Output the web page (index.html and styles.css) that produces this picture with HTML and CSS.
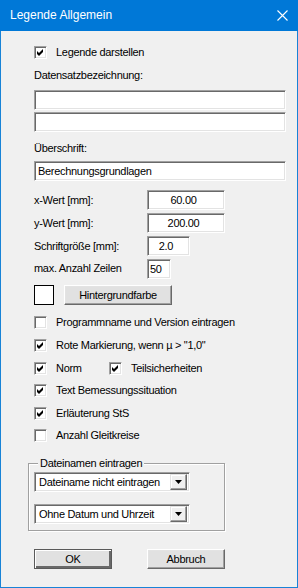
FILE: index.html
```html
<!DOCTYPE html>
<html lang="de">
<head>
    <meta charset="UTF-8">
    <title>Legende Allgemein</title>
    <link rel="stylesheet" href="styles.css">
</head>
<body>
    <div class="dialog">
        <div class="titlebar">
            <span class="title">Legende Allgemein</span>
            <svg class="close" width="11" height="11" viewBox="0 0 11 11">
                <path d="M0.5 0.5 L10.5 10.5 M10.5 0.5 L0.5 10.5" stroke="#fff" stroke-width="1.1" fill="none"/>
            </svg>
        </div>

        <div class="content">
            <div class="check first">
                <span class="cb"><svg width="11" height="11" viewBox="0 0 11 11"><path d="M2 4 L4 6 L8 2 L8 5 L4 9 L2 7 Z"/></svg></span>
                Legende darstellen
            </div>

            <div class="caption cap-top">Datensatzbezeichnung:</div>
            <div class="edit wide ed1"></div>
            <div class="edit wide ed2"></div>

            <div class="caption cap-head">Überschrift:</div>
            <div class="edit wide ed3">Berechnungsgrundlagen</div>

            <div class="field-row fr1">
                <span class="field-label">x-Wert [mm]:</span>
                <div class="edit num">60.00</div>
            </div>
            <div class="field-row">
                <span class="field-label">y-Wert [mm]:</span>
                <div class="edit num">200.00</div>
            </div>
            <div class="field-row">
                <span class="field-label">Schriftgröße [mm]:</span>
                <div class="edit small">2.0</div>
            </div>
            <div class="field-row">
                <span class="field-label lift">max. Anzahl Zeilen</span>
                <div class="edit tiny">50</div>
            </div>

            <div class="color-row">
                <span class="swatch"></span>
                <button class="btn bg-btn">Hintergrundfarbe</button>
            </div>

            <div class="options">
                <div class="check">
                    <span class="cb"></span>
                    Programmname und Version eintragen
                </div>
                <div class="check">
                    <span class="cb"><svg width="11" height="11" viewBox="0 0 11 11"><path d="M2 4 L4 6 L8 2 L8 5 L4 9 L2 7 Z"/></svg></span>
                    Rote Markierung, wenn µ &gt; "1,0"
                </div>
                <div class="check-pair">
                    <div class="check norm">
                        <span class="cb"><svg width="11" height="11" viewBox="0 0 11 11"><path d="M2 4 L4 6 L8 2 L8 5 L4 9 L2 7 Z"/></svg></span>
                        Norm
                    </div>
                    <div class="check">
                        <span class="cb"><svg width="11" height="11" viewBox="0 0 11 11"><path d="M2 4 L4 6 L8 2 L8 5 L4 9 L2 7 Z"/></svg></span>
                        Teilsicherheiten
                    </div>
                </div>
                <div class="check tight">
                    <span class="cb"><svg width="11" height="11" viewBox="0 0 11 11"><path d="M2 4 L4 6 L8 2 L8 5 L4 9 L2 7 Z"/></svg></span>
                    Text Bemessungssituation
                </div>
                <div class="check">
                    <span class="cb"><svg width="11" height="11" viewBox="0 0 11 11"><path d="M2 4 L4 6 L8 2 L8 5 L4 9 L2 7 Z"/></svg></span>
                    Erläuterung StS
                </div>
                <div class="check tight">
                    <span class="cb"></span>
                    Anzahl Gleitkreise
                </div>
            </div>

            <div class="group">
                <span class="group-title">Dateinamen eintragen</span>
                <div class="combo">
                    <span class="combo-text">Dateiname nicht eintragen</span>
                    <span class="combo-btn"><svg width="7" height="4" viewBox="0 0 7 4"><path d="M0 0 H7 L3.5 4 Z"/></svg></span>
                </div>
                <div class="combo second">
                    <span class="combo-text">Ohne Datum und Uhrzeit</span>
                    <span class="combo-btn"><svg width="7" height="4" viewBox="0 0 7 4"><path d="M0 0 H7 L3.5 4 Z"/></svg></span>
                </div>
            </div>

            <div class="actions">
                <button class="btn default">OK</button>
                <button class="btn">Abbruch</button>
            </div>
        </div>
    </div>
</body>
</html>
```

FILE: styles.css
```css
* {
    margin: 0;
    padding: 0;
    box-sizing: border-box;
}

body {
    font-family: "Liberation Sans", Arial, sans-serif;
    font-size: 11px;
    letter-spacing: -0.3px;
    color: #000;
    background: #f0f0f0;
}

.dialog {
    width: 298px;
    height: 588px;
    border: 1px solid #1883d7;
    border-top: none;
    background: #f0f0f0;
}

.titlebar {
    height: 31px;
    background: #0078d7;
    margin: 0 -1px;
    display: flex;
    align-items: center;
    justify-content: space-between;
    padding: 0 10px 0 10px;
}

.title {
    color: #fff;
    font-size: 12px;
    letter-spacing: 0;
    margin-top: -1px;
}

.close {
    display: block;
}

.content {
    padding-left: 33px;
}

/* captions and checkbox rows */
.caption {
    height: 13px;
    line-height: 13px;
}

.cap-top {
    margin-top: 10px;
}

.cap-head {
    margin-top: 10px;
}

.check {
    display: flex;
    align-items: center;
    height: 13px;
    line-height: 13px;
    white-space: nowrap;
}

.check.first {
    margin-top: 15px;
}

.cb {
    width: 13px;
    height: 13px;
    flex: none;
    margin-right: 9px;
    background: #fff;
    border: 1px solid;
    border-color: #a0a0a0 #fff #fff #a0a0a0;
    box-shadow: inset 1px 1px 0 #696969, inset -1px -1px 0 #e3e3e3;
}

.cb svg {
    display: block;
}

/* sunken edit boxes */
.edit {
    height: 20px;
    line-height: 18px;
    background: #fff;
    border: 1px solid;
    border-color: #a0a0a0 #fff #fff #a0a0a0;
    box-shadow: inset 1px 1px 0 #696969, inset -1px -1px 0 #e3e3e3;
    padding: 0 3px;
    white-space: nowrap;
}

.wide {
    width: 252px;
}

.ed1 {
    margin-top: 8px;
}

.ed2 {
    margin-top: 2px;
}

.ed3 {
    margin-top: 6px;
}

.field-row {
    display: flex;
    align-items: center;
    margin-top: 3px;
}

.field-row.fr1 {
    margin-top: 9px;
}

.field-label {
    width: 113px;
    flex: none;
}

.field-label.lift {
    margin-top: -2px;
}

.num {
    width: 78px;
    text-align: center;
    padding-right: 8px;
}

.small {
    width: 43px;
    text-align: center;
    padding-right: 8px;
}

.tiny {
    width: 24px;
    padding-left: 2px;
}

/* colour swatch and button */
.color-row {
    display: flex;
    margin-top: 6px;
    gap: 10px;
}

.swatch {
    width: 20px;
    height: 20px;
    background: #fff;
    border: 1px solid #000;
}

.btn {
    height: 20px;
    font-family: inherit;
    font-size: 11px;
    letter-spacing: inherit;
    color: #000;
    background: #e1e1e1;
    border: 1px solid;
    border-color: #fff #696969 #696969 #fff;
    box-shadow: inset -1px -1px 0 #a0a0a0, inset 1px 1px 0 #e3e3e3;
    padding-bottom: 1px;
}

.bg-btn {
    width: 108px;
}

.btn.default {
    border: 1px solid #5a5a5a;
    box-shadow: inset 1px 1px 0 #fff, inset -2px -2px 0 #696969;
}

/* option checkboxes */
.options {
    margin-top: 11px;
    display: flex;
    flex-direction: column;
    gap: 10px;
}

.options .tight {
    margin-top: -1px;
}

.check-pair {
    display: flex;
}

.check.norm {
    width: 75px;
}

/* group box */
.group {
    position: relative;
    width: 197px;
    margin-left: -6px;
    margin-top: 21px;
    border: 1px solid #a0a0a0;
    box-shadow: 1px 1px 0 #fff, inset 1px 1px 0 #fff;
    padding: 8px 0 6px 5px;
}

.group-title {
    position: absolute;
    top: -7px;
    left: 9px;
    padding: 0 2px;
    line-height: 13px;
    background: #f0f0f0;
}

.combo {
    width: 156px;
    height: 20px;
    display: flex;
    align-items: center;
    justify-content: space-between;
    background: #fff;
    border: 1px solid;
    border-color: #a0a0a0 #fff #fff #a0a0a0;
    box-shadow: inset 1px 1px 0 #696969, inset -1px -1px 0 #e3e3e3;
    padding: 2px 2px 2px 4px;
}

.combo.second {
    margin-top: 12px;
}

.combo-btn {
    width: 17px;
    height: 16px;
    display: flex;
    align-items: center;
    justify-content: center;
    background: #f0f0f0;
    border: 1px solid;
    border-color: #e3e3e3 #696969 #696969 #e3e3e3;
    box-shadow: inset -1px -1px 0 #a0a0a0, inset 1px 1px 0 #fff;
}

/* bottom buttons */
.actions {
    display: flex;
    gap: 35px;
    margin-top: 18px;
}

.actions .btn {
    width: 78px;
}
```
